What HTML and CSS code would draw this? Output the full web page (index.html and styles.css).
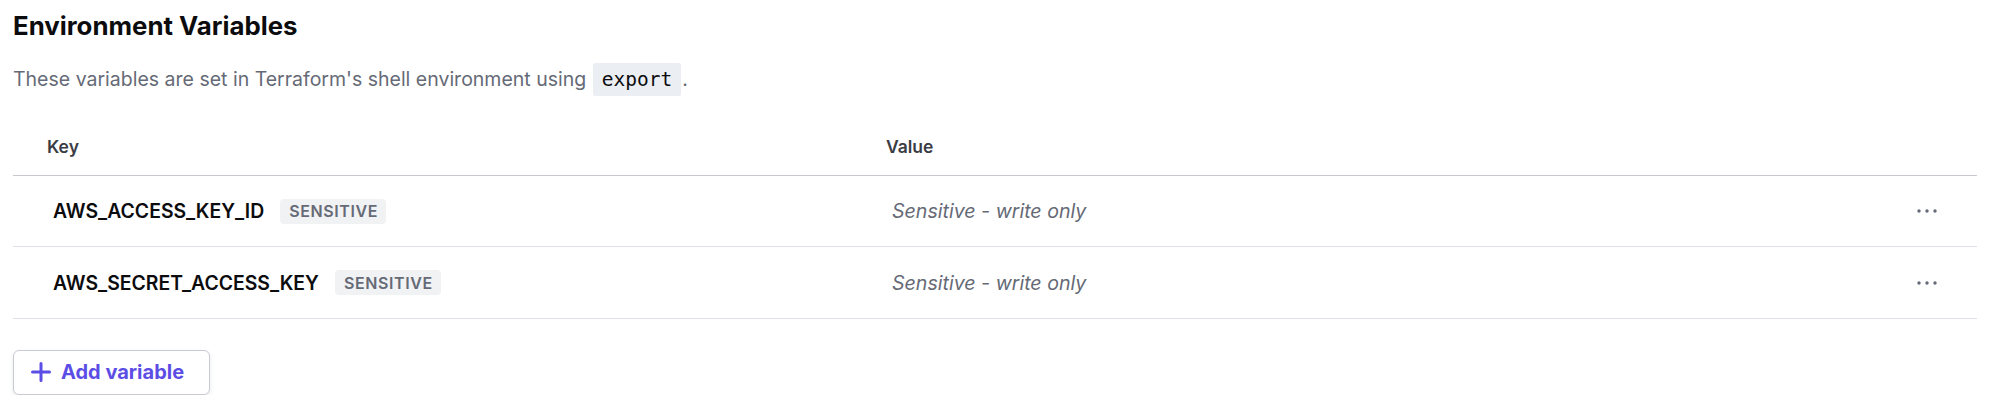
FILE: index.html
```html
<!DOCTYPE html>
<html lang="en">
<head>
<meta charset="utf-8">
<title>Environment Variables</title>
<link rel="stylesheet" href="styles.css">
</head>
<body>
<main class="page">
  <h1 class="title">Environment Variables</h1>
  <p class="desc">These variables are set in Terraform's shell environment using <code class="code">export</code>.</p>

  <div class="table">
    <div class="row head">
      <div class="cell key-cell">Key</div>
      <div class="cell value-cell">Value</div>
      <div class="cell action-cell"></div>
    </div>
    <div class="row">
      <div class="cell key-cell"><span class="key">AWS_ACCESS_KEY_ID</span><span class="badge">SENSITIVE</span></div>
      <div class="cell value-cell"><span class="value">Sensitive - write only</span></div>
      <div class="cell action-cell">
        <svg class="more" width="20" height="4" viewBox="0 0 20 4" aria-hidden="true"><circle cx="2" cy="2" r="1.7"/><circle cx="10" cy="2" r="1.7"/><circle cx="18" cy="2" r="1.7"/></svg>
      </div>
    </div>
    <div class="row">
      <div class="cell key-cell"><span class="key">AWS_SECRET_ACCESS_KEY</span><span class="badge">SENSITIVE</span></div>
      <div class="cell value-cell"><span class="value">Sensitive - write only</span></div>
      <div class="cell action-cell">
        <svg class="more" width="20" height="4" viewBox="0 0 20 4" aria-hidden="true"><circle cx="2" cy="2" r="1.7"/><circle cx="10" cy="2" r="1.7"/><circle cx="18" cy="2" r="1.7"/></svg>
      </div>
    </div>
  </div>

  <button class="add-btn" type="button">
    <svg class="plus" width="20" height="20" viewBox="0 0 20 20" aria-hidden="true"><path d="M10 1.5v17M1.5 10h17" stroke="currentColor" stroke-width="3" stroke-linecap="round" fill="none"/></svg>
    <span>Add variable</span>
  </button>
</main>
</body>
</html>
```
FILE: styles.css
```css
* { box-sizing: border-box; }

html, body {
  margin: 0;
  background: #ffffff;
}

.page {
  padding: 10px 22px 0 13px;
  font-family: Inter, "Noto Sans", "Liberation Sans", sans-serif;
  color: #0c0c0e;
}

.title {
  margin: 0;
  font-size: 25.8px;
  line-height: 32px;
  font-weight: 700;
  color: #0c0c0e;
}

.desc {
  margin: 20px 0 0;
  font-size: 19.5px;
  line-height: 34px;
  color: #656a76;
}

.code {
  display: inline-block;
  margin: 0 1px 0 1px;
  padding: 4px 9px;
  font-family: "DejaVu Sans Mono", "Liberation Mono", monospace;
  font-size: 19.5px;
  line-height: 25px;
  color: #0c0c0e;
  background: #ebeef2;
  border-radius: 2px;
}

.table {
  margin-top: 23px;
}

.row {
  display: grid;
  grid-template-columns: 873px 1fr 120px;
  align-items: center;
  height: 71.4px;
  border-bottom: 1px solid #e1e2e7;
}

.row.head {
  height: 57px;
  padding-bottom: 2px;
  border-bottom-color: #c7c9cf;
}

.cell {
  display: flex;
  align-items: center;
}

.head .cell {
  font-size: 17.5px;
  font-weight: 600;
  color: #3b3d45;
}

.head .key-cell { padding-left: 34px; }
.head .value-cell { padding-left: 0; }

.key-cell { padding-left: 40px; gap: 16px; }
.value-cell { padding-left: 6px; }

.key {
  font-size: 19.4px;
  font-weight: 600;
  color: #0c0c0e;
}

.badge {
  display: inline-flex;
  align-items: center;
  height: 25px;
  padding: 0 8px 0 9px;
  font-size: 16px;
  font-weight: 600;
  letter-spacing: 0.6px;
  color: #656a76;
  background: #f1f2f4;
  border-radius: 4px;
}

.value {
  font-size: 19.6px;
  font-style: italic;
  color: #656a76;
}

.action-cell {
  justify-content: flex-end;
  padding-right: 40px;
}

.more { fill: #656a76; display: block; }

.add-btn {
  display: flex;
  align-items: center;
  gap: 10px;
  margin-top: 31px;
  width: 197px;
  height: 45px;
  padding: 0 0 0 17px;
  font-family: inherit;
  font-size: 20px;
  font-weight: 700;
  color: #5c4ee5;
  background: #ffffff;
  border: 1px solid #c9cbd2;
  border-radius: 6px;
  box-shadow: 0 2px 4px rgba(101, 106, 118, 0.15);
  cursor: pointer;
}

.plus { display: block; }
```
